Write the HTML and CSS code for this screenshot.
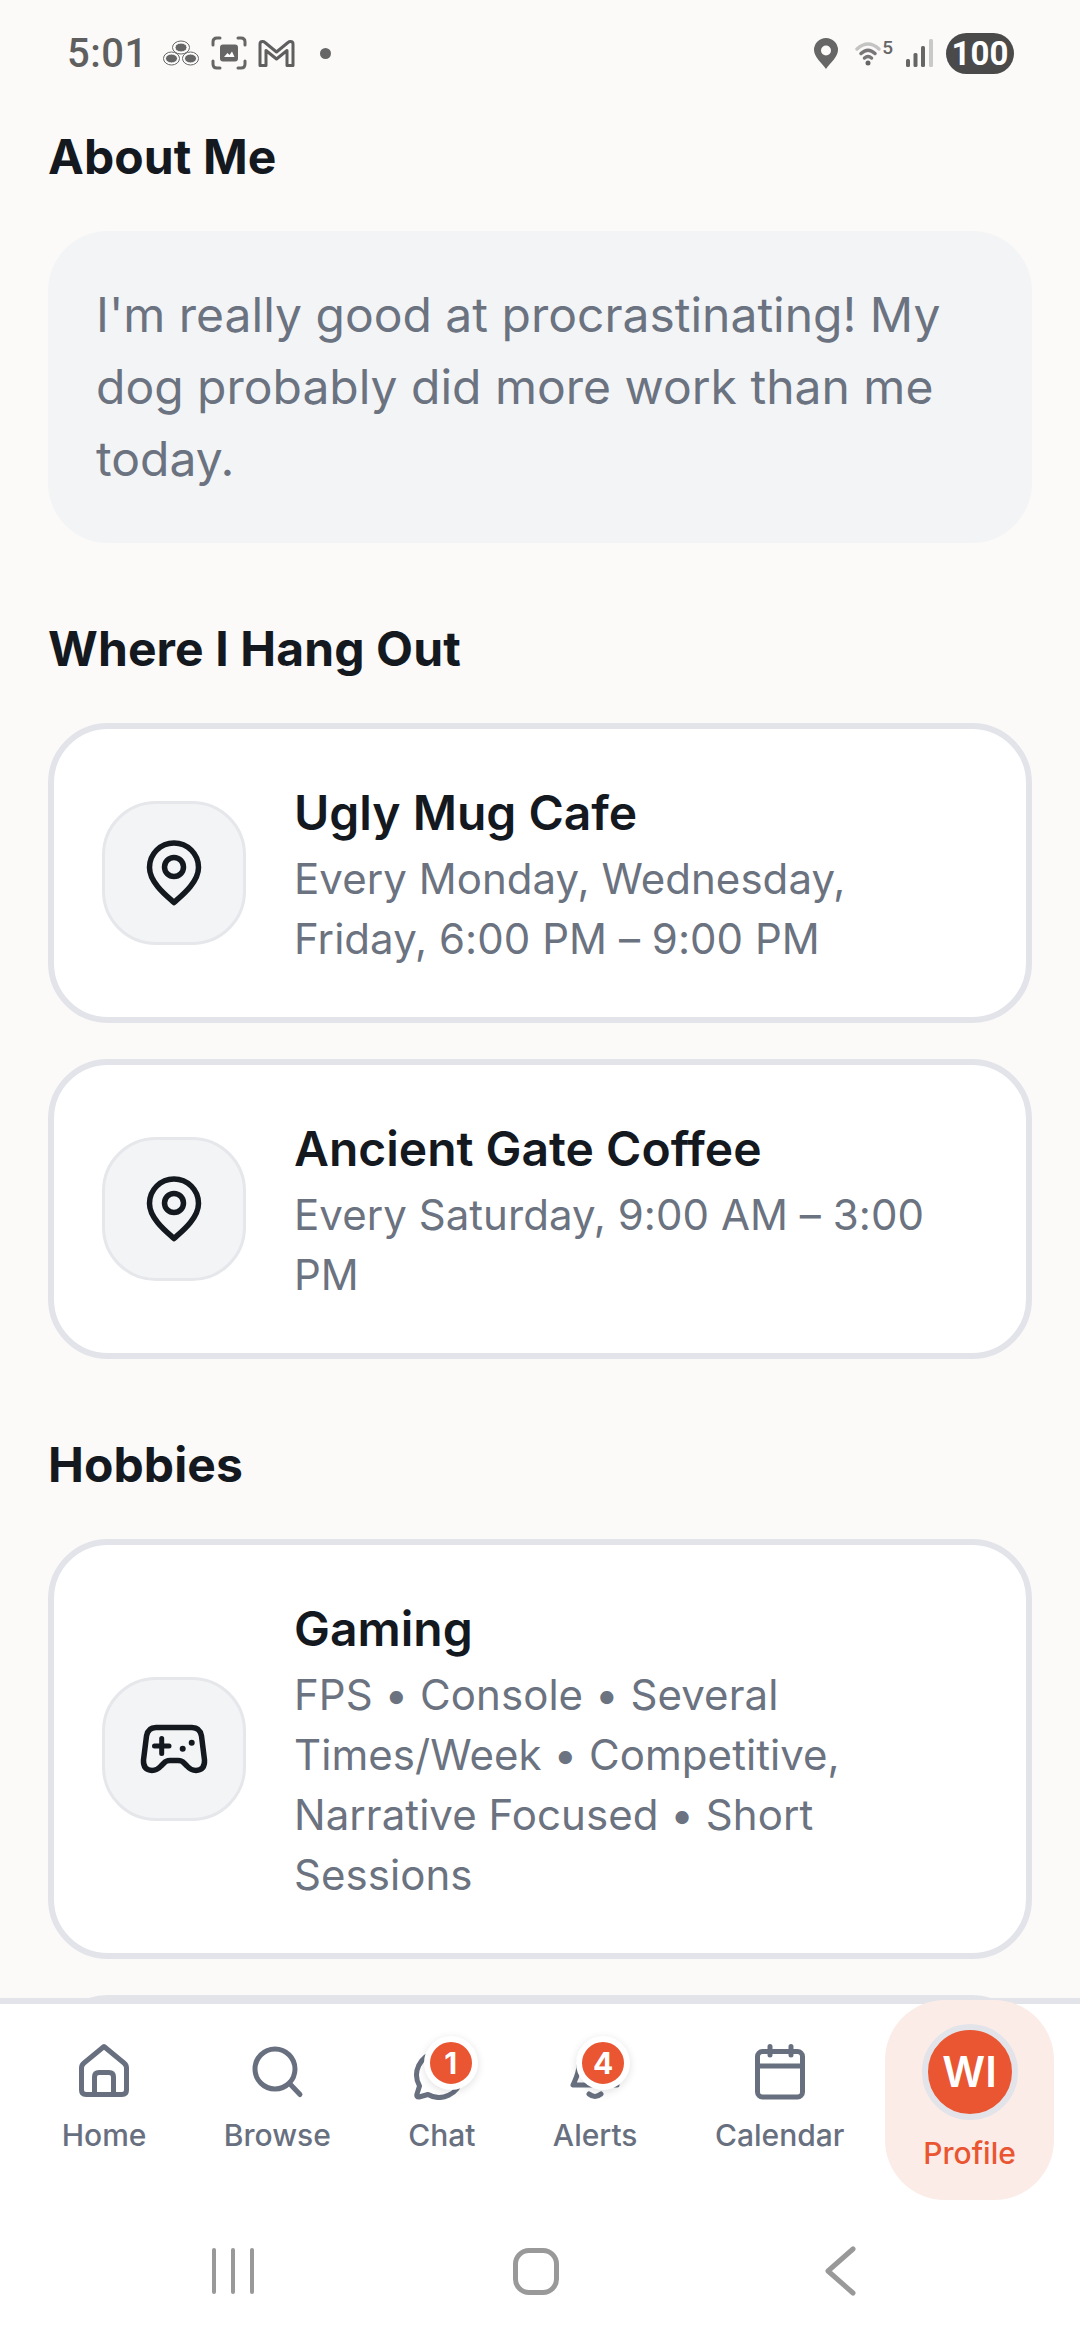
FILE: index.html
```html
<!DOCTYPE html>
<html lang="en">
<head>
<meta charset="utf-8">
<title>Profile</title>
<link rel="stylesheet" href="styles.css">
</head>
<body>
<div class="phone">
  <header class="status">
    <div class="status-left">
      <span class="time">5:01</span>
      <svg class="si si-tri" viewBox="0 0 36 26"><g fill="#666" stroke="#fff" stroke-width="1"><ellipse cx="18" cy="7.500" rx="8.500" ry="6.500" stroke="#666" fill="#fff"/><ellipse cx="18" cy="7.500" rx="6" ry="4.500"/><ellipse cx="8.500" cy="18.500" rx="8" ry="6.500" stroke="#666" fill="#fff"/><ellipse cx="8.500" cy="18.500" rx="6" ry="4.500"/><ellipse cx="27.500" cy="18.500" rx="8" ry="6.500" stroke="#666" fill="#fff"/><ellipse cx="27.500" cy="18.500" rx="6" ry="4.500"/></g></svg>
      <svg class="si si-shot" viewBox="0 0 36 34"><g fill="none" stroke="#666" stroke-width="3" stroke-linecap="round"><path d="M2 9V6Q2 2 6 2H9M27 2H30Q34 2 34 6V9M34 25V28Q34 32 30 32H27M9 32H6Q2 32 2 28V25"/></g><rect x="9" y="8.500" width="18" height="17" rx="3" fill="#666"/><path d="M13 21l3.500-4 2 2 2.500-3.500 2.500 5.500z" fill="#fff"/></svg>
      <svg class="si si-mail" viewBox="0 0 37 27"><path d="M2 25.500V4Q2 1.500 4.500 1.500Q6 1.500 7 2.500L18.500 12 30 2.500Q31 1.500 32.500 1.500Q35 1.500 35 4V25.500H29V10.500L18.500 19 8 10.500V25.500Z" fill="none" stroke="#5f5f5f" stroke-width="3" stroke-linejoin="round"/></svg>
      <span class="status-dot"></span>
    </div>
    <div class="status-right">
      <svg class="si si-loc" viewBox="0 0 26 31"><path fill-rule="evenodd" d="M13 31C9 25 1 19 1 12A12 12 0 0 1 25 12C25 19 17 25 13 31ZM13 7.500A5 5 0 1 0 13 17.500A5 5 0 1 0 13 7.500Z" fill="#666"/></svg>
      <span class="wifi">
        <svg class="si si-wifi" viewBox="0 0 26 26"><g fill="none" stroke-linecap="round" stroke-width="3.500"><path d="M2 9Q13 -1 24 9" stroke="#c4c4c4"/><path d="M6 13.500Q13 7 20 13.500" stroke="#777"/><path d="M9.500 18Q13 15 16.500 18" stroke="#777"/></g><circle cx="13" cy="23" r="2.500" fill="#666"/></svg>
        <span class="wifi-five">5</span>
      </span>
      <svg class="si si-signal" viewBox="0 0 28 28"><g fill="#666"><rect x="0" y="20" width="4" height="8" rx="1.500"/><rect x="7.500" y="14" width="4" height="14" rx="1.500"/><rect x="15" y="7" width="4" height="21" rx="1.500"/></g><rect x="23" y="0" width="4" height="28" rx="1.500" fill="#c9c9c9"/></svg>
      <span class="battery">100</span>
    </div>
  </header>

  <main class="content">
    <h2 class="heading">About Me</h2>
    <p class="about">I'm really good at procrastinating! My dog probably did more work than me today.</p>

    <h2 class="heading section">Where I Hang Out</h2>
    <div class="stack">
      <article class="card">
        <div class="tile">
          <svg class="tile-icon" viewBox="0 0 72 72"><g fill="none" stroke="#14181f" stroke-width="5.500" stroke-linejoin="round"><path d="M36 65.500C30 60 11.500 46 11.500 30.500A24.500 24.500 0 0 1 60.500 30.500C60.500 46 42 60 36 65.500Z"/><circle cx="36" cy="30" r="9.500"/></g></svg>
        </div>
        <div class="card-text">
          <h3 class="card-title">Ugly Mug Cafe</h3>
          <p class="card-desc">Every Monday, Wednesday, Friday, 6:00 PM – 9:00 PM</p>
        </div>
      </article>
      <article class="card">
        <div class="tile">
          <svg class="tile-icon" viewBox="0 0 72 72"><g fill="none" stroke="#14181f" stroke-width="5.500" stroke-linejoin="round"><path d="M36 65.500C30 60 11.500 46 11.500 30.500A24.500 24.500 0 0 1 60.500 30.500C60.500 46 42 60 36 65.500Z"/><circle cx="36" cy="30" r="9.500"/></g></svg>
        </div>
        <div class="card-text">
          <h3 class="card-title">Ancient Gate Coffee</h3>
          <p class="card-desc">Every Saturday, 9:00 AM – 3:00 PM</p>
        </div>
      </article>
    </div>

    <h2 class="heading section">Hobbies</h2>
    <div class="stack">
      <article class="card">
        <div class="tile">
          <svg class="tile-icon" viewBox="0 0 72 72"><path d="M18 14.500H54Q62 14.500 63.500 23L66.500 47Q67 57 58 57.500Q53 57.500 49 53L46 50Q44 47.500 40 47.500H32Q28 47.500 26 50L23 53Q19 57.500 14 57.500Q5 57 5.500 47L8.500 23Q10 14.500 18 14.500Z" fill="none" stroke="#14181f" stroke-width="5.500" stroke-linejoin="round"/><path d="M16.500 33H31M23.700 25.500V40.500" fill="none" stroke="#14181f" stroke-width="5" stroke-linecap="round"/><circle cx="44.700" cy="35.700" r="3" fill="#14181f"/><circle cx="53.700" cy="29.700" r="3" fill="#14181f"/></svg>
        </div>
        <div class="card-text">
          <h3 class="card-title">Gaming</h3>
          <p class="card-desc">FPS • Console • Several Times/Week • Competitive, Narrative Focused • Short Sessions</p>
        </div>
      </article>
      <article class="card card-next"></article>
    </div>
  </main>

  <nav class="nav">
    <a class="nav-item">
      <span class="nav-icon">
        <svg viewBox="0 0 60 60"><g fill="none" stroke="#687080" stroke-width="5" stroke-linejoin="round"><path d="M30 6.500L50 23Q52.500 25 52.500 28V50Q52.500 54.500 48 54.500H12Q7.500 54.500 7.500 50V28Q7.500 25 10 23Z"/><path d="M20.500 54.500V37Q20.500 32.500 25 32.500H35Q39.500 32.500 39.500 37V54.500"/></g></svg>
      </span>
      <span class="nav-label">Home</span>
    </a>
    <a class="nav-item">
      <span class="nav-icon">
        <svg viewBox="0 0 60 60"><g fill="none" stroke="#687080" stroke-width="5" stroke-linecap="round"><circle cx="28" cy="29" r="20"/><path d="M43 44L53 54.500"/></g></svg>
      </span>
      <span class="nav-label">Browse</span>
    </a>
    <a class="nav-item">
      <span class="nav-icon">
        <svg viewBox="0 0 60 60"><path d="M16 54.500L7 57Q4 57 5 54L7.500 46A22.400 22.400 0 1 1 16 54.500Z" fill="none" stroke="#687080" stroke-width="5" stroke-linejoin="round"/></svg>
        <span class="badge badge-chat">1</span>
      </span>
      <span class="nav-label">Chat</span>
    </a>
    <a class="nav-item">
      <span class="nav-icon">
        <svg viewBox="0 0 60 60"><g fill="none" stroke="#687080" stroke-width="5" stroke-linecap="round" stroke-linejoin="round"><path d="M30 7C19 7 14 15 14 24C14 34 10 40 8 45H52C50 40 46 34 46 24C46 15 41 7 30 7Z"/><path d="M24 54Q30 59 36 54"/></g></svg>
        <span class="badge badge-alerts">4</span>
      </span>
      <span class="nav-label">Alerts</span>
    </a>
    <a class="nav-item">
      <span class="nav-icon">
        <svg viewBox="0 0 60 60"><g fill="none" stroke="#687080" stroke-width="5" stroke-linecap="round"><rect x="7.500" y="11.500" width="45" height="45.500" rx="5"/><path d="M7.500 26H52.500M20 6.500V15M41 6.500V15"/></g></svg>
      </span>
      <span class="nav-label">Calendar</span>
    </a>
    <a class="nav-item nav-active">
      <span class="avatar">WI</span>
      <span class="nav-label">Profile</span>
    </a>
  </nav>

  <footer class="gesture">
    <span class="recents"><i></i><i></i><i></i></span>
    <span class="home-key"></span>
    <svg class="back-key" viewBox="0 0 34 52"><path d="M30 4L5 26L30 48" fill="none" stroke="#999" stroke-width="5" stroke-linecap="round" stroke-linejoin="round"/></svg>
  </footer>
</div>
</body>
</html>
```

FILE: styles.css
```css
* { box-sizing: border-box; margin: 0; padding: 0; }
html, body { width: 1080px; height: 2340px; overflow: hidden; background: #fff; }
body { font-family: Inter, "Liberation Sans", sans-serif; }

.phone { width: 1080px; height: 2340px; display: flex; flex-direction: column; background: #fbfaf8; }

.status { flex: none; height: 106px; padding: 0 66px 0 67px; display: flex; justify-content: space-between; align-items: center; }
.status-left, .status-right { display: flex; align-items: center; }
.time { font: 500 40px Roboto, sans-serif; letter-spacing: 0.5px; color: #5f5f5f; margin-right: 15px; }
.si { display: block; flex: none; }
.si-tri { width: 36px; height: 26px; margin-right: 12px; }
.si-shot { width: 36px; height: 34px; margin-right: 11px; }
.si-mail { width: 37px; height: 27px; margin-right: 25px; }
.status-dot { width: 11px; height: 11px; border-radius: 50%; background: #666; }
.si-loc { width: 26px; height: 31px; margin-right: 16px; }
.wifi { display: flex; align-items: flex-start; margin-right: 13px; }
.si-wifi { width: 26px; height: 26px; }
.wifi-five { font: 500 19px/16px Roboto, sans-serif; color: #666; margin-left: 1px; }
.si-signal { width: 28px; height: 28px; margin-right: 12px; }
.battery { width: 68px; height: 41px; border-radius: 21px; background: #4a4a4a; color: #fff; font: 700 33px/41px Roboto, sans-serif; text-align: center; }

.content { flex: 1; min-height: 0; overflow: hidden; padding: 21px 48px 0; }
.heading { font-size: 48px; line-height: 60px; font-weight: 700; color: #14181f; letter-spacing: 0.1px; margin-bottom: 44px; }
.section { margin-top: 76px; }
.about { height: 312px; padding: 48px 48px; background: #f3f4f6; border-radius: 60px; font-size: 48px; line-height: 72px; color: #6b7280; }
.stack { display: flex; flex-direction: column; gap: 36px; }
.card { display: flex; align-items: center; gap: 48px; padding: 48px; background: #fff; border: 6px solid #e2e4ea; border-radius: 60px; }
.card-next { height: 300px; }
.tile { flex: none; width: 144px; height: 144px; display: flex; align-items: center; justify-content: center; background: #f3f4f6; border: 3px solid #e5e7eb; border-radius: 54px; }
.tile-icon { width: 72px; height: 72px; display: block; }
.card-text { flex: 1; min-width: 0; }
.card-title { font-size: 48px; line-height: 72px; font-weight: 600; color: #14181f; }
.card-desc { font-size: 42px; line-height: 60px; letter-spacing: 0.05px; color: #6b7280; }

.nav { flex: none; height: 202px; display: flex; align-items: flex-start; padding: 0 0 0 23px; background: #fff; border-top: 6px solid #e2e4ea; }
.nav-item { flex: none; display: flex; flex-direction: column; align-items: center; padding: 36px 38.7px 0; color: #687080; }
.nav-icon { position: relative; display: block; width: 60px; height: 60px; }
.nav-icon svg { display: block; width: 60px; height: 60px; }
.nav-label { font-size: 30px; line-height: 40px; font-weight: 500; margin-top: 15px; white-space: nowrap; }
.nav-active { width: 169px; height: 200px; margin: -4px 0 0 2px; padding: 24px 0 0; background: #fcece7; border-radius: 60px; color: #e95631; }
.nav-active .nav-label { margin-top: 13px; }
.avatar { width: 96px; height: 96px; border-radius: 50%; background: #e95631; border: 6px solid #e2e4ea; color: #fff; font-size: 42px; line-height: 84px; font-weight: 600; text-align: center; }
.badge { position: absolute; top: -4px; width: 54px; height: 54px; border-radius: 50%; background: #e95631; border: 6px solid #fff; box-shadow: 0 2px 8px rgba(0,0,0,.12); color: #fff; font-size: 30px; line-height: 42px; font-weight: 700; text-align: center; }
.badge-chat { left: 12px; }
.badge-alerts { left: 11px; }

.gesture { flex: none; height: 140px; padding: 2px 0 0 0; background: #fff; display: flex; align-items: center; }
.recents { display: flex; gap: 15px; margin-left: 212px; }
.recents i { display: block; width: 4px; height: 46px; border-radius: 2px; background: #999; }
.home-key { width: 46px; height: 47px; margin-left: 259px; border: 5px solid #999; border-radius: 16px; }
.back-key { width: 34px; height: 52px; margin-left: 264px; display: block; }
```
